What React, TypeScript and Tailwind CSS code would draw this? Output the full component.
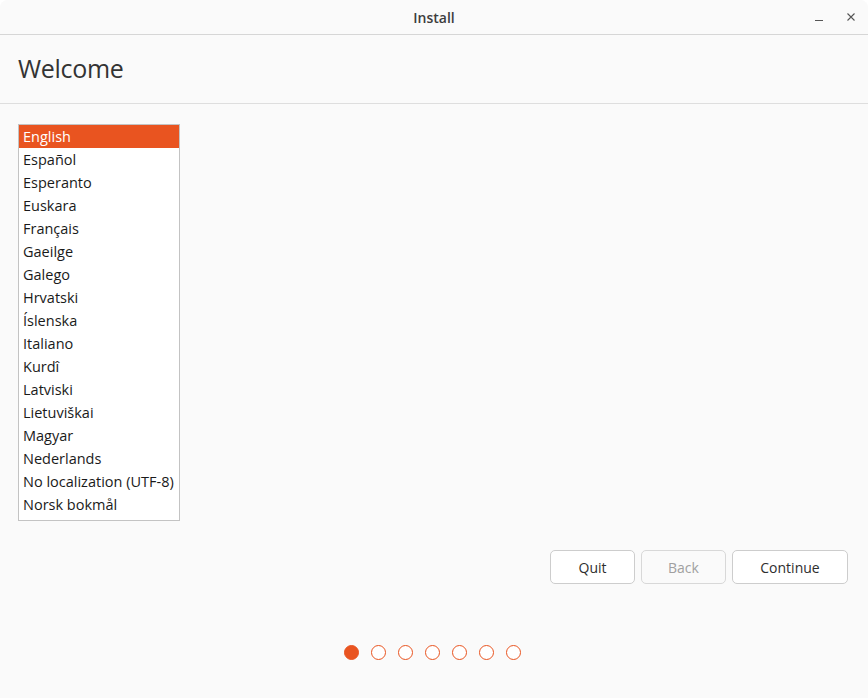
const languages = [
  "English",
  "Español",
  "Esperanto",
  "Euskara",
  "Français",
  "Gaeilge",
  "Galego",
  "Hrvatski",
  "Íslenska",
  "Italiano",
  "Kurdî",
  "Latviski",
  "Lietuviškai",
  "Magyar",
  "Nederlands",
  "No localization (UTF-8)",
  "Norsk bokmål",
];

export default function App() {
  const selected = 0;
  const step = 0;

  return (
    <div
      className="flex h-[698px] w-[868px] flex-col overflow-hidden rounded-t-[8px] bg-[#fafafa] text-[#3d3d3d]"
      style={{ fontFamily: '"Open Sans", "Noto Sans", sans-serif' }}
    >
      {/* title bar */}
      <div className="relative flex h-[35px] shrink-0 items-center justify-center border-b border-[#d6d6d6] bg-[#fafafa]">
        <span className="text-[14px] font-semibold text-[#3d3d3d]">Install</span>
        <div className="absolute right-[12px] top-0 flex h-full items-center gap-[22px] text-[#555]">
          <svg width="10" height="10" viewBox="0 0 10 10" aria-hidden>
            <path d="M1 8.5h8" stroke="currentColor" strokeWidth="1" />
          </svg>
          <svg width="10" height="10" viewBox="0 0 10 10" aria-hidden>
            <path d="M1.5 1.5l7 7M8.5 1.5l-7 7" stroke="currentColor" strokeWidth="1.1" />
          </svg>
        </div>
      </div>

      {/* header */}
      <div className="flex h-[69px] shrink-0 items-center border-b border-[#dedede] px-[18px]">
        <h1 className="text-[25px] font-normal tracking-[-0.3px] text-[#333]">Welcome</h1>
      </div>

      {/* body */}
      <div className="flex flex-1 flex-col px-[18px] pt-[20px]">
        <div className="h-[397px] w-[162px] border border-[#c3c3c3] bg-white">
          {languages.map((lang, i) => (
            <div
              key={lang}
              className={`flex h-[23px] items-center whitespace-nowrap px-[4px] text-[14.5px] ${
                i === selected ? "bg-[#e95420] text-white" : "text-[#1a1a1a]"
              }`}
            >
              {lang}
            </div>
          ))}
        </div>

        <div className="mt-[29px] flex justify-end gap-[6px] pr-[2px]">
          <button className="h-[34px] w-[85px] rounded-[5px] border border-[#cdcdcd] bg-white text-[14px] text-[#2e2e2e]">
            Quit
          </button>
          <button
            disabled
            className="h-[34px] w-[85px] rounded-[5px] border border-[#d8d8d8] bg-[#fafafa] text-[14px] text-[#a0a0a0]"
          >
            Back
          </button>
          <button className="h-[34px] w-[116px] rounded-[5px] border border-[#cdcdcd] bg-white text-[14px] text-[#2e2e2e]">
            Continue
          </button>
        </div>

        <div className="mt-[61px] flex justify-center gap-[12px] pr-[4px]">
          {Array.from({ length: 7 }).map((_, i) => (
            <span
              key={i}
              className={`h-[15px] w-[15px] rounded-full border-[1.5px] border-[#e95420] ${
                i === step ? "bg-[#e95420]" : "bg-white"
              }`}
            />
          ))}
        </div>
      </div>
    </div>
  );
}
